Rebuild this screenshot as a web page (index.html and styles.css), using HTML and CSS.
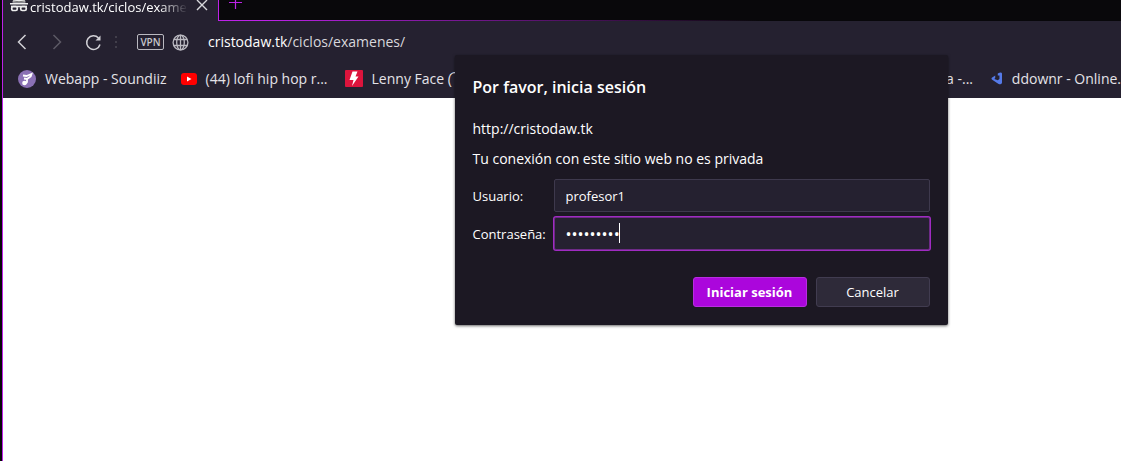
FILE: index.html
```html
<!DOCTYPE html>
<html lang="es">
<head>
<meta charset="utf-8">
<title>cristodaw.tk/ciclos/examenes</title>
<link rel="stylesheet" href="styles.css">
</head>
<body>
<div class="browser">
  <header class="tabs">
    <div class="tab">
      <svg class="incognito" width="18" height="14" viewBox="0 0 18 14"><path d="M3.500 0h11l1 4.500h-13zM0 5h18v1.500H0z" fill="#eee"/><path d="M3 3q6 1.500 12 0" fill="none" stroke="#777" stroke-width="1"/><g fill="none" stroke="#eee" stroke-width="1.700"><rect x="1.750" y="8.500" width="5.500" height="4" rx="1.500"/><rect x="10.750" y="8.500" width="5.500" height="4" rx="1.500"/><path d="M1 8.500h16"/></g></svg>
      <span class="tab-title">cristodaw.tk/ciclos/exame</span>
      <button class="icon-button" aria-label="Cerrar pestaña"><svg width="12" height="12" viewBox="0 0 12 12"><path d="M1 0l10 10M11 0L1 10" stroke="#d8d8dc" stroke-width="1.400"/></svg></button>
    </div>
    <div class="strip">
      <button class="icon-button" aria-label="Nueva pestaña"><svg width="13" height="13" viewBox="0 0 13 13"><path d="M6.500 0v13M0 6.500h13" stroke="#bd22e8" stroke-width="1.200"/></svg></button>
    </div>
  </header>
  <nav class="toolbar">
    <button class="icon-button" aria-label="Atrás"><svg width="10" height="16" viewBox="0 0 10 16"><path d="M8.500 1L1.500 8l7 7" fill="none" stroke="#d2d1d6" stroke-width="1.500"/></svg></button>
    <button class="icon-button forward" aria-label="Adelante"><svg width="10" height="16" viewBox="0 0 10 16"><path d="M1.500 1l7 7-7 7" fill="none" stroke="#5c5965" stroke-width="1.500"/></svg></button>
    <button class="icon-button reload" aria-label="Recargar"><svg width="17" height="17" viewBox="0 0 17 17"><path d="M13.500 4A6.800 6.800 0 1 0 15 10.500" fill="none" stroke="#d2d1d6" stroke-width="1.500"/><path d="M15.500 1.500v5H10.500z" fill="#d2d1d6"/></svg></button>
    <svg class="dots" width="3" height="12" viewBox="0 0 3 12"><path d="M0 0h2v2H0zM0 5h2v2H0zM0 10h2v2H0z" fill="#413e4a"/></svg>
    <span class="vpn">VPN</span>
    <svg class="globe" width="17" height="17" viewBox="0 0 17 17" fill="none" stroke="#bab9c0" stroke-width="1.300"><circle cx="8.500" cy="8.500" r="7.400"/><ellipse cx="8.500" cy="8.500" rx="3.800" ry="7.400"/><path d="M8.500 1v15M2 5.500h13M2 11.500h13"/></svg>
    <span class="address">cristodaw.tk<span class="path">/ciclos/examenes/</span></span>
  </nav>
  <nav class="bookmarks">
    <a class="bookmark" href="#"><svg width="18" height="18" viewBox="0 0 18 18"><circle cx="9" cy="9" r="9" fill="#8a70b4"/><path d="M5 5.500l3.500.5 5-2-.8 2.500L9 9v3l-1 1.500M6 8.500l3 .5" fill="none" stroke="#fff" stroke-width="1.800"/><circle cx="6.500" cy="13" r="2.300" fill="#fff"/></svg>Webapp - Soundiiz</a>
    <a class="bookmark second" href="#"><svg width="16" height="18" viewBox="0 0 16 18"><rect y="3" width="16" height="12" rx="3" fill="#f00"/><path d="M6 6.500v5L10.500 9z" fill="#fff"/></svg>(44) lofi hip hop r...</a>
    <a class="bookmark third" href="#"><svg width="18" height="18" viewBox="0 0 18 18"><rect width="18" height="17" rx="1" fill="#dc143c"/><path d="M7.500 1.500h5l-2 5h3L7 16l1.500-6h-4z" fill="#fff"/></svg>Lenny Face ( ͡°</a>
    <span class="bookmark trailing">a -...</span>
    <a class="bookmark last" href="#"><svg width="14" height="16" viewBox="0 0 14 16"><path d="M8 1.500q4.500-2.500 5 0v11q-1 3-4.500 1L1 8.500q-1-1 0-2L5 4v2.500L4 8l4 1.500 2-1.500V4H8z" fill="#557ae8"/></svg>ddownr - Online.</a>
  </nav>
  <main class="page"></main>
  <form class="dialog" role="dialog" aria-labelledby="title">
    <h1 class="title" id="title">Por favor, inicia sesión</h1>
    <p class="origin">http://cristodaw.tk</p>
    <p class="warning">Tu conexión con este sitio web no es privada</p>
    <div class="fields">
      <label for="user">Usuario:</label>
      <input class="field" id="user" type="text" value="profesor1">
      <label for="pass">Contraseña:</label>
      <div class="password-box">
        <input class="field focused" id="pass" type="password" value="profesor1">
        <span class="caret"></span>
      </div>
    </div>
    <div class="actions">
      <button class="button primary" type="button">Iniciar sesión</button>
      <button class="button" type="button">Cancelar</button>
    </div>
  </form>
</div>
</body>
</html>
```
FILE: styles.css
```css
* { box-sizing: border-box; }
body {
  margin: 0;
  font: 13px/18px "Open Sans", "Noto Sans", sans-serif;
  color: #fff;
  background: #fff;
}
.browser {
  position: relative;
  display: flex;
  flex-direction: column;
  min-height: 100vh;
  border-left: 2px solid #08070a;
  overflow: hidden;
}
.tabs, .toolbar, .bookmarks, .page { border-left: 1px solid #bd22e8; }
.tabs { display: flex; height: 21px; background: #252130; }
.tab {
  display: flex;
  align-items: flex-start;
  width: 215px;
  padding: 0 10px 0 7px;
}
.incognito { flex: none; margin-right: 2px; margin-top: -2px; }
.tab-title {
  flex: 1;
  white-space: nowrap;
  line-height: 14px;
  -webkit-mask-image: linear-gradient(to right, #000 82%, transparent);
  mask-image: linear-gradient(to right, #000 82%, transparent);
}
.icon-button {
  display: flex;
  padding: 0;
  border: 0;
  background: none;
}
.tab .icon-button { margin-left: 8px; }
.strip {
  flex: 1;
  padding-left: 10px;
  border-left: 1px solid #bd22e8;
  background: linear-gradient(to right, #bd22e8 5%, #08070a 60%) bottom / 100% 1px no-repeat #09080b;
}
.strip .icon-button { margin-top: -4px; }
.toolbar {
  display: flex;
  align-items: center;
  height: 42px;
  padding-left: 14px;
  background: #252130;
}
.forward { margin-left: 25px; }
.reload { margin-left: 23px; }
.dots { margin-left: 13px; }
.vpn {
  width: 27px;
  height: 16px;
  margin-left: 19px;
  border: 1px solid #bab9c0;
  border-radius: 2px;
  color: #c8c7cd;
  font-size: 10px;
  font-weight: 600;
  line-height: 14px;
  text-align: center;
}
.globe { margin-left: 8px; }
.address { margin-left: 19px; font-size: 14px; }
.path { color: #d8d7dc; }
.bookmarks {
  display: flex;
  align-items: center;
  height: 35px;
  padding-left: 15px;
  padding-bottom: 4px;
  background: #252130;
  font-size: 14px;
  white-space: nowrap;
}
.bookmark {
  display: flex;
  flex: none;
  align-items: center;
  gap: 9px;
  color: #e4e3e8;
  text-decoration: none;
}
.second { margin-left: 14px; }
.third { margin-left: 17px; }
.trailing { margin-left: auto; }
.last { margin-left: 18px; width: 130px; }
.page { flex: 1; background: #fff; }
.dialog {
  position: absolute;
  top: 55px;
  left: calc(50% - 107px);
  width: 493px;
  padding: 21px 18px 18px;
  border-radius: 2px;
  background: #1c1823;
  box-shadow: 0 1px 3px #0009;
}
.title { margin: 0; font-size: 16px; font-weight: 600; line-height: 22px; }
.origin, .warning { font-size: 14px; }
.origin { margin: 22px 0 0; }
.warning { margin: 12px 0 11px; }
.fields {
  display: grid;
  grid-template-columns: 81px 1fr;
  align-items: center;
  row-gap: 5px;
}
.field {
  display: block;
  width: 100%;
  height: 33px;
  padding: 0 11px;
  border: 1px solid #3e394d;
  border-radius: 2px;
  outline: 0;
  background: #252130;
  color: #fff;
  font: inherit;
}
.focused {
  border-color: #6d2b86;
  box-shadow: 0 0 0 1px #a02bc2;
  font-size: 16px;
}
.password-box { position: relative; }
.caret {
  position: absolute;
  top: 6px;
  left: 65px;
  width: 1px;
  height: 20px;
  background: #fff;
}
.actions {
  display: flex;
  justify-content: flex-end;
  gap: 9px;
  margin-top: 27px;
}
.button {
  width: 114px;
  height: 30px;
  border: 1px solid #413c50;
  border-radius: 3px;
  background: #2e2a39;
  color: #fff;
  font: inherit;
}
.primary { border-color: #b82de0; background: #ab06dc; font-weight: 700; }
```
